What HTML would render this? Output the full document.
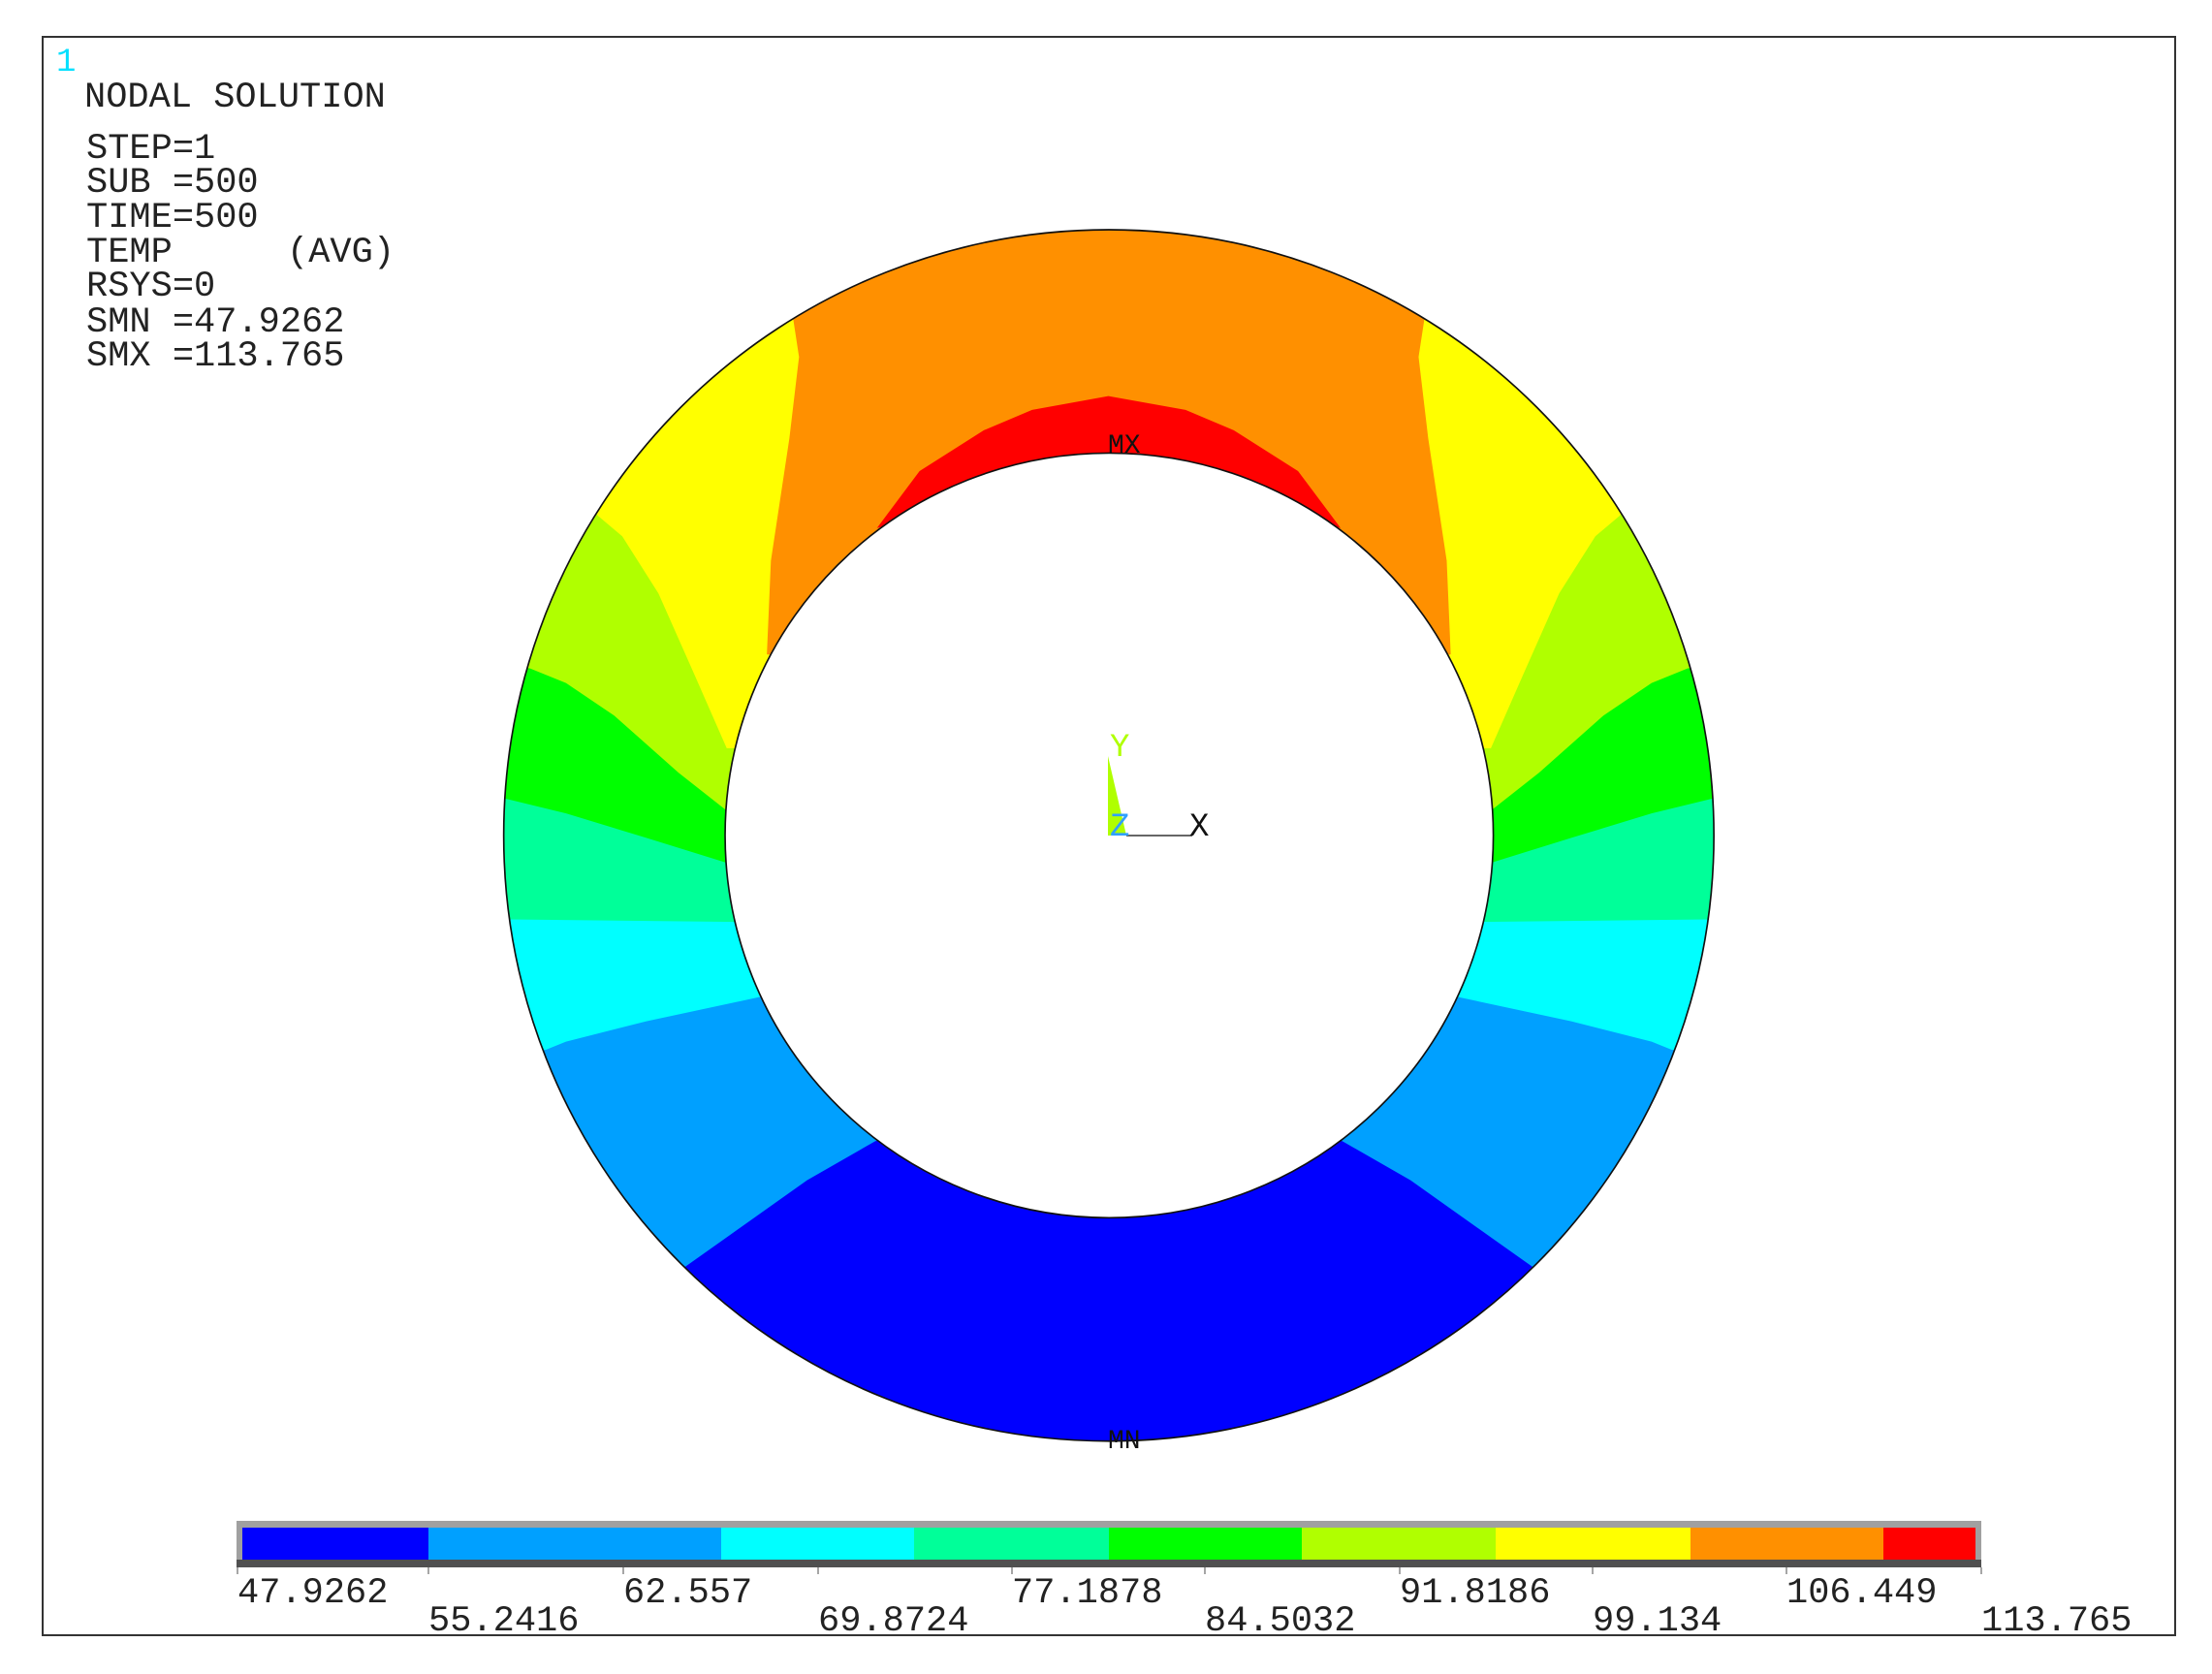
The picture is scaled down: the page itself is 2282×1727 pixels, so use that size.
<!DOCTYPE html>
<html><head><meta charset="utf-8"><style>
html,body{margin:0;padding:0;background:#fff;}
svg{display:block}
text{font-family:"Liberation Mono",monospace;}
</style></head><body>
<svg width="2282" height="1727" viewBox="0 0 2282 1727" xmlns="http://www.w3.org/2000/svg">
<rect x="0" y="0" width="2282" height="1727" fill="#fff"/>
<rect x="44" y="38" width="2200" height="1649" fill="none" stroke="#333" stroke-width="2"/>
<g font-size="37" fill="#222">
<text x="58" y="73" fill="#00e0ff" font-size="34">1</text>
<text x="87" y="110">NODAL SOLUTION</text>
<text x="89" y="163">STEP=1</text>
<text x="89" y="198">SUB =500</text>
<text x="89" y="234">TIME=500</text>
<text x="89" y="270">TEMP</text>
<text x="296" y="270">(AVG)</text>
<text x="89" y="305">RSYS=0</text>
<text x="89" y="342">SMN =47.9262</text>
<text x="89" y="377">SMX =113.765</text>
</g>
<defs><clipPath id="outer"><ellipse cx="775.5" cy="787" rx="753" ry="743"/></clipPath></defs>
<g transform="translate(501,200) scale(0.829,0.841)">
<g clip-path="url(#outer)">
<rect x="-100" y="-100" width="1800" height="1800" fill="#0000ff"/>
<polygon fill="#00a0ff" points="150,1390 250,1315 300,1280 400,1210 485,1162 776,1100 1066,1162 1151,1210 1251,1280 1301,1315 1401,1390 1700,1390 1700,-100 -100,-100 -100,1390"/>
<polygon fill="#00ffff" points="-100,1070 75,1050 100,1040 200,1015 342,985 776,950 1209,985 1351,1015 1451,1040 1476,1050 1700,1070 1700,-100 -100,-100"/>
<polygon fill="#00ff99" points="-100,890 30,890 300,893 1251,893 1521,890 1700,890 1700,-100 -100,-100"/>
<polygon fill="#00ff00" points="-100,745 25,742 100,760 200,790 298,820 1253,820 1351,790 1451,760 1526,742 1700,745 1700,-100 -100,-100"/>
<polygon fill="#b0ff00" points="-100,570 55,582 100,600 160,640 240,710 298,755 1253,755 1311,710 1391,640 1451,600 1496,582 1700,570 1700,-100 -100,-100"/>
<polygon fill="#ffff00" points="60,300 140,395 170,420 215,490 260,590 300,680 1251,680 1291,590 1336,490 1381,420 1411,395 1491,300 1700,-100 -100,-100"/>
<polygon fill="#ff9000" points="383,-100 383,155 390,200 378,300 355,450 350,565 775,600 1201,565 1196,450 1173,300 1161,200 1168,155 1168,-100"/>
<polygon fill="#ff0000" points="487,410 540,340 620,290 680,265 775,248 871,265 931,290 1011,340 1064,410 775,330"/>
</g>
<ellipse cx="775.5" cy="787" rx="753" ry="743" fill="none" stroke="#111" stroke-width="2"/>
<ellipse cx="776" cy="787" rx="478" ry="469" fill="#fff" stroke="#111" stroke-width="2"/>
</g>
<text x="1143" y="467" font-size="28" fill="#111">MX</text>
<text x="1143" y="1494" font-size="28" fill="#111">MN</text>
<polygon points="1143,780 1143,862 1162,862" fill="#b0ff00"/>
<line x1="1162" y1="862" x2="1230" y2="862" stroke="#666" stroke-width="2"/>
<text x="1145" y="780" font-size="34" fill="#b0ff00">Y</text>
<text x="1145" y="862" font-size="34" fill="#30a0ff">Z</text>
<text x="1227" y="862" font-size="34" fill="#111">X</text>
<rect x="244" y="1569" width="1800" height="48" fill="#a0a0a0"/>
<rect x="244" y="1609" width="1800" height="8" fill="#505050"/>
<rect x="250" y="1576" width="192" height="33" fill="#0000ff"/>
<rect x="442" y="1576" width="302" height="33" fill="#00a0ff"/>
<rect x="744" y="1576" width="199" height="33" fill="#00ffff"/>
<rect x="943" y="1576" width="201" height="33" fill="#00ff99"/>
<rect x="1144" y="1576" width="199" height="33" fill="#00ff00"/>
<rect x="1343" y="1576" width="200" height="33" fill="#b0ff00"/>
<rect x="1543" y="1576" width="201" height="33" fill="#ffff00"/>
<rect x="1744" y="1576" width="199" height="33" fill="#ff9000"/>
<rect x="1943" y="1576" width="95" height="33" fill="#ff0000"/>
<g stroke="#888" stroke-width="1.5">
<line x1="245" y1="1617" x2="245" y2="1624"/><line x1="442" y1="1617" x2="442" y2="1624"/>
<line x1="643" y1="1617" x2="643" y2="1624"/><line x1="844" y1="1617" x2="844" y2="1624"/>
<line x1="1044" y1="1617" x2="1044" y2="1624"/><line x1="1243" y1="1617" x2="1243" y2="1624"/>
<line x1="1444" y1="1617" x2="1444" y2="1624"/><line x1="1643" y1="1617" x2="1643" y2="1624"/>
<line x1="1843" y1="1617" x2="1843" y2="1624"/><line x1="2044" y1="1617" x2="2044" y2="1624"/>
</g>
<g font-size="37" fill="#222">
<text x="245" y="1653">47.9262</text>
<text x="643" y="1653">62.557</text>
<text x="1044" y="1653">77.1878</text>
<text x="1444" y="1653">91.8186</text>
<text x="1843" y="1653">106.449</text>
<text x="442" y="1682">55.2416</text>
<text x="844" y="1682">69.8724</text>
<text x="1243" y="1682">84.5032</text>
<text x="1643" y="1682">99.134</text>
<text x="2044" y="1682">113.765</text>
</g>
</svg>
</body></html>
